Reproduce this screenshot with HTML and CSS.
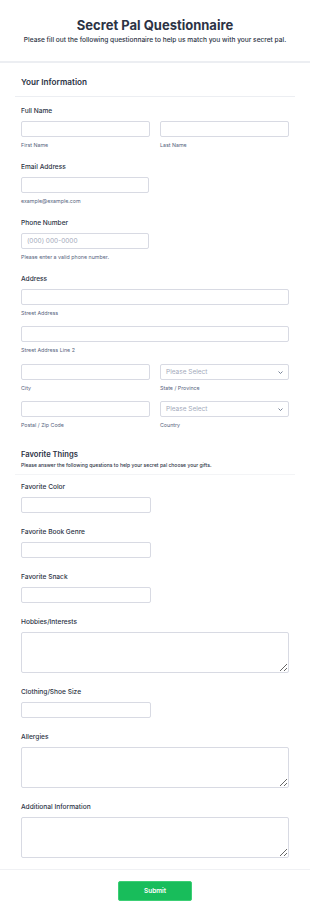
FILE: index.html
```html
<!DOCTYPE html>
<html lang="en">
<head>
<meta charset="utf-8">
<title>Secret Pal Questionnaire</title>
<link rel="stylesheet" href="styles.css">
</head>
<body>
<header class="header">
  <h1 class="title">Secret Pal Questionnaire</h1>
  <p class="subtitle">Please fill out the following questionnaire to help us match you with your secret pal.</p>
</header>
<form class="form">
  <div class="section-head">
    <h2 class="section-title">Your Information</h2>
  </div>

  <div class="field">
    <label class="label">Full Name</label>
    <div class="row">
      <div class="col"><input class="input" type="text"><span class="sub">First Name</span></div>
      <div class="col"><input class="input" type="text"><span class="sub">Last Name</span></div>
    </div>
  </div>

  <div class="field">
    <label class="label">Email Address</label>
    <input class="input input-mid" type="text">
    <span class="sub">example@example.com</span>
  </div>

  <div class="field">
    <label class="label">Phone Number</label>
    <input class="input input-mid" type="text" placeholder="(000) 000-0000">
    <span class="sub">Please enter a valid phone number.</span>
  </div>

  <div class="field field-address">
    <label class="label">Address</label>
    <div class="addr-line"><input class="input" type="text"><span class="sub">Street Address</span></div>
    <div class="addr-line"><input class="input" type="text"><span class="sub">Street Address Line 2</span></div>
    <div class="row addr-row">
      <div class="col"><input class="input" type="text"><span class="sub">City</span></div>
      <div class="col"><div class="select"><span>Please Select</span><svg class="chev" viewBox="0 0 10 6" width="5" height="3"><path d="M1 1l4 4 4-4" fill="none" stroke="#57647e" stroke-width="1.6"/></svg></div><span class="sub">State / Province</span></div>
    </div>
    <div class="row addr-row">
      <div class="col"><input class="input" type="text"><span class="sub">Postal / Zip Code</span></div>
      <div class="col"><div class="select"><span>Please Select</span><svg class="chev" viewBox="0 0 10 6" width="5" height="3"><path d="M1 1l4 4 4-4" fill="none" stroke="#57647e" stroke-width="1.6"/></svg></div><span class="sub">Country</span></div>
    </div>
  </div>

  <div class="section-head section-fav">
    <h2 class="section-title small">Favorite Things</h2>
    <p class="section-desc">Please answer the following questions to help your secret pal choose your gifts.</p>
  </div>

  <div class="field field-plain">
    <label class="label">Favorite Color</label>
    <input class="input input-short" type="text">
  </div>
  <div class="field field-plain">
    <label class="label">Favorite Book Genre</label>
    <input class="input input-short" type="text">
  </div>
  <div class="field field-plain">
    <label class="label">Favorite Snack</label>
    <input class="input input-short" type="text">
  </div>
  <div class="field field-plain">
    <label class="label">Hobbies/Interests</label>
    <textarea class="textarea"></textarea>
  </div>
  <div class="field field-plain">
    <label class="label">Clothing/Shoe Size</label>
    <input class="input input-short" type="text">
  </div>
  <div class="field field-plain">
    <label class="label">Allergies</label>
    <textarea class="textarea"></textarea>
  </div>
  <div class="field field-plain">
    <label class="label">Additional Information</label>
    <textarea class="textarea"></textarea>
  </div>

  <div class="footer">
    <button class="submit" type="button">Submit</button>
  </div>
</form>
</body>
</html>
```

FILE: styles.css
```css
* { box-sizing: border-box; }
html, body { margin: 0; padding: 0; background: #fff; }
body {
  font-family: Inter, "Noto Sans", "Liberation Sans", sans-serif;
  color: #2c3345;
  width: 310px;
}
.header {
  text-align: center;
  padding: 16px 0 16px;
  border-bottom: 2px solid #eceef2;
}
.title {
  margin: 0;
  font-size: 13px;
  line-height: 18px;
  font-weight: 700;
  color: #2c3345;
}
.subtitle {
  margin: 2px 0 0;
  font-size: 6.6px;
  line-height: 9px;
  font-weight: 500;
  color: #2c3345;
}
.form {
  display: flex;
  flex-direction: column;
  padding: 0;
}
.section-head {
  margin: 0 15px;
  padding: 13px 6px 8px;
  border-bottom: 1px solid #eceef2;
}
.section-title {
  margin: 0;
  font-size: 8.2px;
  line-height: 12px;
  font-weight: 600;
  color: #2c3345;
}
.section-title.small { font-size: 7.6px; line-height: 10px; }
.section-fav {
  padding-top: 18px;
  padding-bottom: 5px;
  border-bottom-color: #f3f4f6;
}
.section-desc {
  margin: 1px 0 0;
  font-size: 5px;
  line-height: 8px;
  font-weight: 500;
  color: #2c3345;
}
.field {
  display: flex;
  flex-direction: column;
  padding: 9px 21px 3px;
}
.field + .field { padding-top: 10px; }
.field + .field-plain { padding-top: 11px; }
.section-head + .field { padding-top: 9px; }
.section-fav + .field { padding-top: 7px; }
.label {
  font-size: 6.6px;
  line-height: 10px;
  font-weight: 500;
  color: #2c3345;
  margin-bottom: 5px;
}
.row {
  display: flex;
  flex-direction: row;
  gap: 10px;
}
.col {
  flex: 1;
  min-width: 0;
  display: flex;
  flex-direction: column;
}
.input {
  display: block;
  height: 16px;
  width: 100%;
  border: 1px solid #d8dae3;
  border-radius: 2px;
  padding: 0 5px;
  font-family: inherit;
  font-size: 6.5px;
  color: #2c3345;
  background: #fff;
  outline: none;
}
.input::placeholder { color: #a3a9ba; }
.input-mid { width: 128px; }
.input-short { width: 130px; }
.sub {
  margin-top: 4px;
  font-size: 5.3px;
  line-height: 8px;
  color: #57647e;
}
.addr-line { display: flex; flex-direction: column; }
.addr-line + .addr-line { margin-top: 9px; }
.addr-row { margin-top: 10px; }
.addr-row + .addr-row { margin-top: 9px; }
.select {
  height: 16px;
  border: 1px solid #d8dae3;
  border-radius: 2px;
  padding: 0 5px;
  display: flex;
  align-items: center;
  justify-content: space-between;
  font-size: 6.5px;
  color: #a3a9ba;
}
.chev { display: block; }
.textarea {
  display: block;
  width: 100%;
  height: 41px;
  border: 1px solid #d8dae3;
  border-radius: 2px;
  font-family: inherit;
  resize: vertical;
  outline: none;
}
.footer {
  margin-top: 8px;
  border-top: 1px solid #f0f1f4;
  padding: 11px 0 17px;
  display: flex;
  justify-content: center;
}
.submit {
  width: 74px;
  height: 20px;
  background: #18bd5b;
  border: 1px solid #3ccf75;
  border-radius: 2px;
  color: #fff;
  font-family: inherit;
  font-size: 6.5px;
  font-weight: 600;
  padding: 0;
}
```
